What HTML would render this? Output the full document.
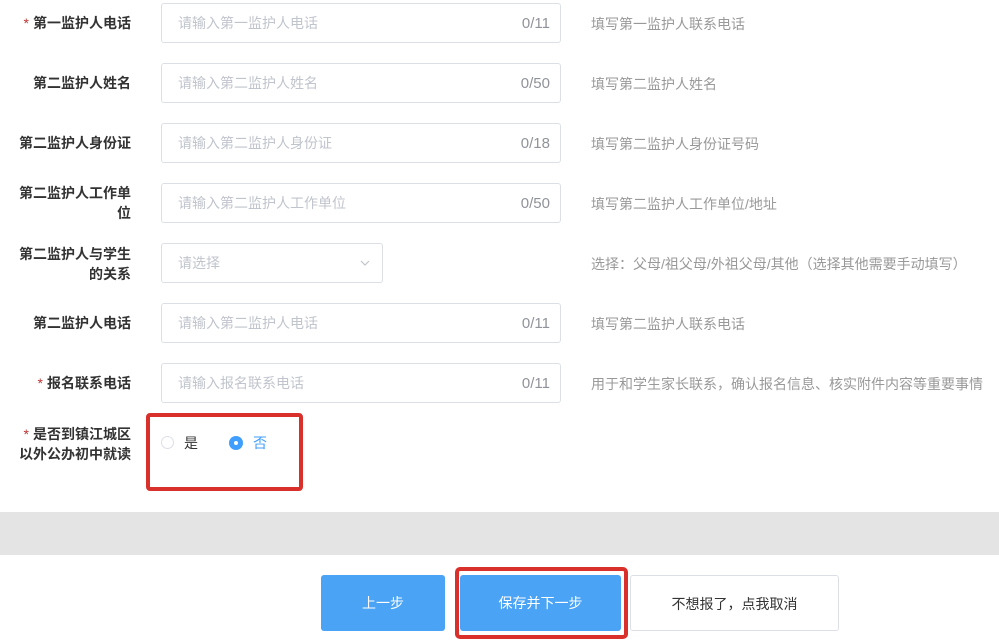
<!DOCTYPE html>
<html><head><meta charset="utf-8"><style>
*{box-sizing:border-box;margin:0;padding:0}
body{width:999px;height:640px;background:#fff;position:relative;overflow:hidden;font-family:"Liberation Sans","Noto Sans CJK SC",sans-serif;font-size:14px}
.lab{position:absolute;right:868px;text-align:right;color:#333;font-weight:bold;line-height:20px;width:130px}
.lab i{color:#b33;font-style:normal;font-weight:normal;margin-right:4px}
.inp{position:absolute;left:161px;width:400px;height:40px;border:1px solid #dcdfe6;border-radius:3px;color:#c0c4cc;padding-left:16px;line-height:38px}
.inp span{position:absolute;right:10px;top:1px;color:#909399;font-size:15px}
.help{position:absolute;left:591px;color:#999;font-size:14px}
.btn{position:absolute;top:575px;height:56px;border-radius:3px;line-height:56px;text-align:center;font-size:14px}
</style></head><body>

<div class="lab" style="top:13px"><i>*</i>第一监护人电话</div>
<div class="inp" style="top:3px">请输入第一监护人电话<span>0/11</span></div>
<div class="help" style="top:14px">填写第一监护人联系电话</div>

<div class="lab" style="top:73px">第二监护人姓名</div>
<div class="inp" style="top:63px">请输入第二监护人姓名<span>0/50</span></div>
<div class="help" style="top:74px">填写第二监护人姓名</div>

<div class="lab" style="top:133px">第二监护人身份证</div>
<div class="inp" style="top:123px">请输入第二监护人身份证<span>0/18</span></div>
<div class="help" style="top:134px">填写第二监护人身份证号码</div>

<div class="lab" style="top:183px">第二监护人工作单<br>位</div>
<div class="inp" style="top:183px">请输入第二监护人工作单位<span>0/50</span></div>
<div class="help" style="top:194px">填写第二监护人工作单位/地址</div>

<div class="lab" style="top:244px">第二监护人与学生<br>的关系</div>
<div class="inp" style="top:243px;width:222px">请选择<svg style="position:absolute;left:198px;top:16px" width="10" height="6" viewBox="0 0 10 6"><path d="M1 1L5 5L9 1" fill="none" stroke="#c0c4cc" stroke-width="1.2"/></svg></div>
<div class="help" style="top:254px">选择：父母/祖父母/外祖父母/其他（选择其他需要手动填写）</div>

<div class="lab" style="top:313px">第二监护人电话</div>
<div class="inp" style="top:303px">请输入第二监护人电话<span>0/11</span></div>
<div class="help" style="top:314px">填写第二监护人联系电话</div>

<div class="lab" style="top:373px"><i>*</i>报名联系电话</div>
<div class="inp" style="top:363px">请输入报名联系电话<span>0/11</span></div>
<div class="help" style="top:374px;white-space:nowrap">用于和学生家长联系，确认报名信息、核实附件内容等重要事情</div>

<div class="lab" style="top:424px"><i>*</i>是否到镇江城区<br>以外公办初中就读</div>
<div style="position:absolute;left:146px;top:413px;width:157px;height:78px;border:4px solid #d9302c;border-radius:4px"></div>
<div style="position:absolute;left:161px;top:436px;width:13px;height:13px;border:1px solid #dcdfe6;border-radius:50%"></div>
<div style="position:absolute;left:184px;top:433px;color:#333">是</div>
<div style="position:absolute;left:229px;top:436px;width:14px;height:14px;background:#409eff;border-radius:50%"><div style="width:4px;height:4px;background:#fff;border-radius:50%;margin:5px"></div></div>
<div style="position:absolute;left:253px;top:433px;color:#409eff">否</div>

<div style="position:absolute;left:0;top:512px;width:999px;height:43px;background:#e4e4e4"></div>

<div class="btn" style="left:321px;width:124px;background:#4aa3f5;color:#fff">上一步</div>
<div style="position:absolute;left:455px;top:567px;width:173px;height:72px;border:4px solid #d9302c;border-radius:5px"></div>
<div class="btn" style="left:460px;width:161px;background:#4aa3f5;color:#fff">保存并下一步</div>
<div class="btn" style="left:630px;width:209px;border:1px solid #dcdfe6;color:#333;background:#fff">不想报了，点我取消</div>
</body></html>
